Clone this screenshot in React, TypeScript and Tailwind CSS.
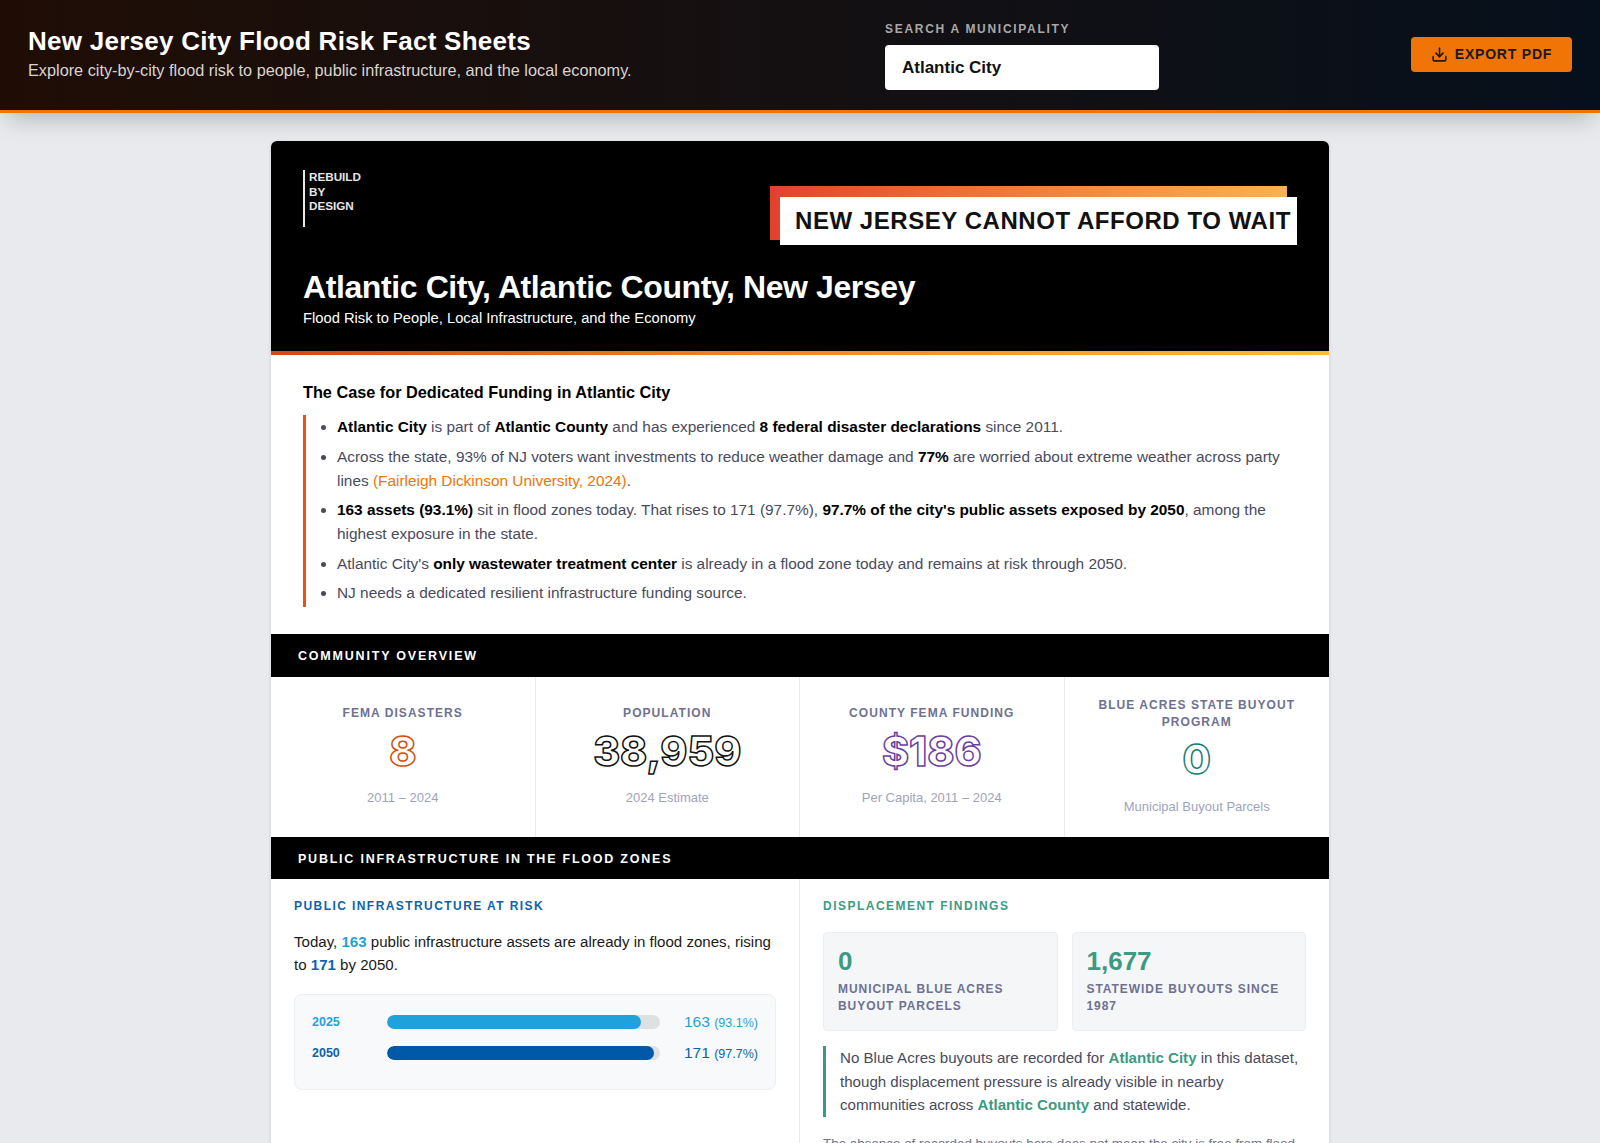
import { Download } from "lucide-react";

const Stat = ({ label, value, sub, stroke, tall, last }: { label: string; value: string; sub: string; stroke: string; tall?: boolean; last?: boolean }) => (
  <div className={`flex flex-col items-center text-center px-5 ${tall ? "pt-[20px]" : "pt-[28px]"} ${last ? "" : "border-r border-[#e8e9ec]"}`}>
    <div className="text-[12px] leading-[17px] font-bold tracking-[1.05px] text-[#6e7191] uppercase">{label}</div>
    <div className={`font-['Inter',sans-serif] text-[41px] leading-[50px] font-extrabold ${tall ? "mt-[3px]" : "mt-[4px]"} text-transparent ${stroke}`}>{value}</div>
    <div className={`text-[13px] leading-[18px] text-[#a0a3bd] ${tall ? "mt-[14px]" : "mt-[13px]"}`}>{sub}</div>
  </div>
);

const Bar = ({ year, pct, n, p, fill, text }: { year: string; pct: number; n: string; p: string; fill: string; text: string }) => (
  <div className="flex items-center h-[14px]">
    <div className={`w-[75px] text-[12.5px] font-bold ${text}`}>{year}</div>
    <div className="w-[273px] h-[14px] rounded-full bg-[#dfe0e2] overflow-hidden">
      <div className={`h-full rounded-full ${fill}`} style={{ width: `${pct}%` }} />
    </div>
    <div className={`ml-[24px] -mt-[1px] whitespace-nowrap text-[15.5px] ${text}`}>
      {n} <span className="text-[12.5px]">{p}</span>
    </div>
  </div>
);

export default function App() {
  return (
    <div className="h-[1143px] overflow-hidden bg-[#e8eaed] font-['Liberation_Sans',Arial,sans-serif]">
      <header className="relative h-[113px] border-b-[3px] border-[#f07406] bg-gradient-to-r from-[#1f0d05] to-[#06101c] shadow-[0_12px_24px_-8px_rgba(0,0,0,0.25)] flex items-start">
        <div className="w-[885px] pl-[28px] pt-[25px] shrink-0">
          <h1 className="text-[26px] leading-[32px] font-bold tracking-[0.27px] text-white">New Jersey City Flood Risk Fact Sheets</h1>
          <p className="text-[16.27px] leading-[24px] text-[#d8d4d0] mt-[1px]">Explore city-by-city flood risk to people, public infrastructure, and the local economy.</p>
        </div>
        <div className="w-[274px] shrink-0 pt-[21px]">
          <div className="text-[12px] leading-[16px] font-bold tracking-[1.7px] text-[#a8a8a8] mb-[8px]">SEARCH A MUNICIPALITY</div>
          <div className="h-[45px] rounded-[4px] bg-white flex items-center pl-[17px] text-[17px] font-bold text-[#111]">Atlantic City</div>
        </div>
        <button className="ml-auto mr-[28px] mt-[37px] h-[35px] w-[161px] rounded-[4px] bg-[#f07406] flex items-center justify-center gap-[7px] text-[14px] font-bold tracking-[0.8px] text-[#1a1a1a]">
          <Download size={17} strokeWidth={2.2} />
          EXPORT PDF
        </button>
      </header>

      <main className="w-[1058px] ml-[271px] mt-[28px] bg-white rounded-t-[6px] overflow-hidden shadow-[0_1px_4px_rgba(0,0,0,0.12)]">
        <section className="bg-black h-[214px] border-b-[4px] [border-image:linear-gradient(to_right,#d9431e,#f08a24,#f5c02e)_1] pl-[32px] pr-[32px] relative">
          <div className="pt-[30px]">
            <div className="border-l-2 border-[#e8e8e8] h-[57px] pl-[4px] text-[11.7px] leading-[14.5px] font-bold text-[#e6e6e6] w-max -mt-[1px]">
              REBUILD<br />BY<br />DESIGN
            </div>
          </div>
          <div className="absolute left-[499px] top-[45px] w-[517px] h-[54px] bg-gradient-to-r from-[#e2412c] to-[#f7b24f]">
            <div className="absolute left-[10px] top-[11px] w-[517px] h-[48px] bg-white pl-[15px] flex items-center text-[24px] font-bold tracking-[0.55px] text-[#111] whitespace-nowrap">
              NEW JERSEY CANNOT AFFORD TO WAIT
            </div>
          </div>
          <h2 className="mt-[41px] text-[32px] leading-[38px] font-bold tracking-[-0.4px] text-white">Atlantic City, Atlantic County, New Jersey</h2>
          <p className="text-[14.73px] leading-[20px] text-white mt-[2px]">Flood Risk to People, Local Infrastructure, and the Economy</p>
        </section>

        <section className="h-[279px] px-[32px] pt-[26px]">
          <h3 className="text-[16.27px] leading-[22px] font-bold text-black">The Case for Dedicated Funding in Atlantic City</h3>
          <ul className="mt-[12px] pb-[2px] border-l-[3px] border-[#e8540f] pl-[31px] list-disc text-[15.4px] leading-[23.87px] text-[#4a4a5e] space-y-[5.75px] marker:text-[#4a4a5e]">
            <li><strong className="text-black">Atlantic City</strong> is part of <strong className="text-black">Atlantic County</strong> and has experienced <strong className="text-black">8 federal disaster declarations</strong> since 2011.</li>
            <li>Across the state, 93% of NJ voters want investments to reduce weather damage and <strong className="text-black">77%</strong> are worried about extreme weather across party lines <span className="text-[#f07406]">(Fairleigh Dickinson University, 2024)</span>.</li>
            <li><strong className="text-black">163 assets (93.1%)</strong> sit in flood zones today. That rises to 171 (97.7%), <strong className="text-black">97.7% of the city's public assets exposed by 2050</strong>, among the highest exposure in the state.</li>
            <li>Atlantic City's <strong className="text-black">only wastewater treatment center</strong> is already in a flood zone today and remains at risk through 2050.</li>
            <li>NJ needs a dedicated resilient infrastructure funding source.</li>
          </ul>
        </section>

        <div className="h-[43px] bg-black flex items-center pl-[27px] pt-[2px] text-[12.5px] font-bold tracking-[1.8px] text-white">COMMUNITY OVERVIEW</div>
        <div className="grid grid-cols-4 h-[160px]">
          <Stat label="FEMA Disasters" value="8" sub="2011 – 2024" stroke="[-webkit-text-stroke:1.5px_#d4500f]" />
          <Stat label="Population" value="38,959" sub="2024 Estimate" stroke="[-webkit-text-stroke:1.5px_#111]" />
          <Stat label="County FEMA Funding" value="$186" sub="Per Capita, 2011 – 2024" stroke="[-webkit-text-stroke:1.5px_#6b3fa0]" />
          <Stat label="Blue Acres State Buyout Program" value="0" sub="Municipal Buyout Parcels" stroke="[-webkit-text-stroke:1.5px_#1a7a7a]" tall last />
        </div>
        <div className="h-[42px] bg-black flex items-center pl-[27px] pt-[3px] text-[12.5px] font-bold tracking-[1.77px] text-white">PUBLIC INFRASTRUCTURE IN THE FLOOD ZONES</div>

        <div className="grid grid-cols-[529px_1fr]">
          <div className="border-r border-[#e8e9ec] px-[23px] pt-[19px]">
            <div className="text-[12px] leading-[16px] font-bold tracking-[1.43px] text-[#0f62ac]">PUBLIC INFRASTRUCTURE AT RISK</div>
            <p className="mt-[16px] text-[15.07px] leading-[23px] text-[#1a1a1a]">
              Today, <strong className="text-[#1fa2dc]">163</strong> public infrastructure assets are already in flood zones, rising to <strong className="text-[#0f62ac]">171</strong> by 2050.
            </p>
            <div className="mt-[18px] w-[482px] h-[96px] rounded-[8px] bg-[#f8f9fa] border border-[#eceef0] px-[17px] pt-[20px] flex flex-col gap-[17px]">
              <Bar year="2025" pct={93.1} n="163" p="(93.1%)" fill="bg-[#1fa2dc]" text="text-[#1fa2dc]" />
              <Bar year="2050" pct={97.7} n="171" p="(97.7%)" fill="bg-[#0059a8]" text="text-[#0f62ac]" />
            </div>
          </div>
          <div className="px-[23px] pt-[19px]">
            <div className="text-[12px] leading-[16px] font-bold tracking-[1.48px] text-[#3d9a82]">DISPLACEMENT FINDINGS</div>
            <div className="mt-[18px] grid grid-cols-2 gap-[14px]">
              <div className="h-[99px] rounded-[4px] bg-[#f4f6f7] border border-[#eceef0] px-[14px] pt-[13px]">
                <div className="text-[26px] leading-[30px] font-bold text-[#3d9a82]">0</div>
                <div className="mt-[5px] text-[12px] leading-[17px] font-bold tracking-[0.95px] text-[#6e7191]">MUNICIPAL BLUE ACRES BUYOUT PARCELS</div>
              </div>
              <div className="h-[99px] rounded-[4px] bg-[#f4f6f7] border border-[#eceef0] px-[14px] pt-[13px]">
                <div className="text-[26px] leading-[30px] font-bold text-[#3d9a82]">1,677</div>
                <div className="mt-[5px] text-[12px] leading-[17px] font-bold tracking-[0.95px] text-[#6e7191]">STATEWIDE BUYOUTS SINCE 1987</div>
              </div>
            </div>
            <div className="mt-[15px] border-l-[3px] border-[#3d9a82] pl-[14px] text-[15.1px] leading-[23.5px] text-[#4a4a5e]">
              No Blue Acres buyouts are recorded for <strong className="text-[#3d9a82]">Atlantic City</strong> in this dataset, though displacement pressure is already visible in nearby communities across <strong className="text-[#3d9a82]">Atlantic County</strong> and statewide.
            </div>
            <p className="mt-[17px] text-[13.4px] leading-[20px] text-[#6e7191]">The absence of recorded buyouts here does not mean the city is free from flood-related displacement.</p>
          </div>
        </div>
      </main>
    </div>
  );
}
